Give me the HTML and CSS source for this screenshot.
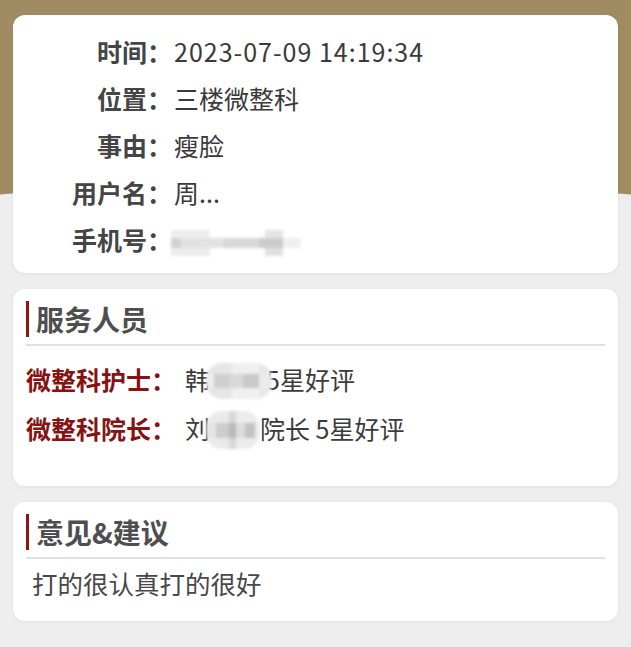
FILE: index.html
```html
<!DOCTYPE html>
<html lang="zh-CN">
<head>
  <meta charset="UTF-8" />
  <meta name="viewport" content="width=device-width, initial-scale=1.0"/>
  <title>服务评价详情</title>
  <link rel="stylesheet" href="styles.css">
</head>
<body>

<div class="page">

  <section class="card info">
    <div class="row"><span class="label">时间：</span><span class="value date">2023-07-09 14:19:34</span></div>
    <div class="row"><span class="label">位置：</span><span class="value">三楼微整科</span></div>
    <div class="row"><span class="label">事由：</span><span class="value">瘦脸</span></div>
    <div class="row"><span class="label">用户名：</span><span class="value">周...</span></div>
    <div class="row"><span class="label">手机号：</span><span class="value"><span class="mask phone"></span></span></div>
  </section>

  <section class="card staff">
    <h2 class="title">服务人员</h2>
    <div class="staff-row">
      <span class="role">微整科护士：</span>
      <span class="who">韩<span class="mask name-a"></span>5星好评</span>
    </div>
    <div class="staff-row">
      <span class="role">微整科院长：</span>
      <span class="who">刘<span class="mask name-b"></span>院长 5星好评</span>
    </div>
  </section>

  <section class="card advice">
    <h2 class="title">意见&amp;建议</h2>
    <p class="advice-text">打的很认真打的很好</p>
  </section>

</div>

</body>
</html>
```

FILE: styles.css
```css
body {
  margin: 0;
  font-family: "Noto Sans CJK SC", "Noto Sans", sans-serif;
  background-color: #eeeeee;
  color: #3c3c3c;
}

.page {
  background:
    radial-gradient(60% 20px at 50% 100%, #eeeeee 97%, transparent 100%) 0 185px / 100% 20px no-repeat,
    linear-gradient(#a08b63, #a08b63) top / 100% 205px no-repeat;
  padding: 15px 13px 28px;
  display: flex;
  flex-direction: column;
  gap: 16px;
}

.card {
  background: #fff;
  border-radius: 12px;
  box-shadow: 0 1px 4px rgba(0, 0, 0, 0.06);
  padding: 12px 13px;
}

/* basic info */
.info {
  padding: 13px 13px 10px;
}

.row {
  display: grid;
  grid-template-columns: 146px 1fr;
  line-height: 47px;
  font-size: 25px;
}

.label {
  text-align: right;
  font-weight: bold;
  color: #454545;
  text-spacing-trim: space-all;
}

.value {
  margin-left: 2px;
  color: #3a3a3a;
}

.date {
  letter-spacing: 0.04em;
}

.mask {
  display: inline-block;
  vertical-align: middle;
  filter: blur(1.5px);
}

.phone {
  width: 130px;
  height: 26px;
  margin-left: -3px;
  background:
    linear-gradient(90deg, #ededed 0 30%, transparent 30% 72%, #e4e4e4 72% 86%, transparent 86%) top / 100% 30% no-repeat,
    linear-gradient(90deg, #d2d2d2 0 8%, #e2e2e2 8% 40%, #d8d8d8 40% 68%, #cbcbcb 68% 86%, #efefef 86%) center / 100% 40% no-repeat,
    linear-gradient(90deg, #ececec 0 30%, transparent 30% 72%, #e0e0e0 72% 86%, transparent 86%) bottom / 100% 30% no-repeat;
}

/* section title */
.title {
  margin: 0;
  font-size: 28px;
  line-height: 36px;
  font-weight: bold;
  color: #4e4e4e;
}

.title::before {
  content: "";
  display: inline-block;
  width: 3px;
  height: 36px;
  background: #8a1515;
  margin-right: 7px;
  vertical-align: top;
}

.title::after {
  content: "";
  display: block;
  height: 2px;
  background: #e0e0e0;
  margin-top: 7px;
}

/* staff */
.staff {
  padding-bottom: 33px;
}

.staff-row {
  display: flex;
  font-size: 25px;
  line-height: 49px;
}

.staff-row:first-of-type {
  margin-top: 9px;
}

.role {
  color: #861212;
  font-weight: bold;
  width: 159px;
  flex-shrink: 0;
  text-spacing-trim: space-all;
}

.who {
  color: #3c3c3c;
}

.name-a {
  width: 66px;
  height: 36px;
  margin: -4px -6px 0 -4px;
  border-radius: 16px;
  background:
    linear-gradient(90deg, #ededed 0 12%, #cfcfcf 12% 36%, #d9d9d9 36% 56%, #c9c9c9 56% 80%, #ececec 80%) center / 100% 40% no-repeat,
    linear-gradient(90deg, #e6e6e6 0 40%, #f0f0f0 40% 80%, #e8e8e8 80%);
}

.name-b {
  width: 54px;
  height: 38px;
  margin: -4px 0 0 -4px;
  border-radius: 16px;
  background:
    linear-gradient(90deg, #e4e4e4 0 18%, #cdcdcd 18% 42%, #b9b9b9 42% 56%, #dcdcdc 56% 72%, #c3c3c3 72% 90%, #ececec 90%) center / 100% 40% no-repeat,
    linear-gradient(90deg, #eaeaea 0 42%, #d8d8d8 42% 56%, #ececec 56%);
}

/* advice */
.advice {
  padding-bottom: 18px;
}

.advice-text {
  margin: 4px 0 0 6px;
  font-size: 25.5px;
  line-height: 40px;
  color: #484848;
}
```
